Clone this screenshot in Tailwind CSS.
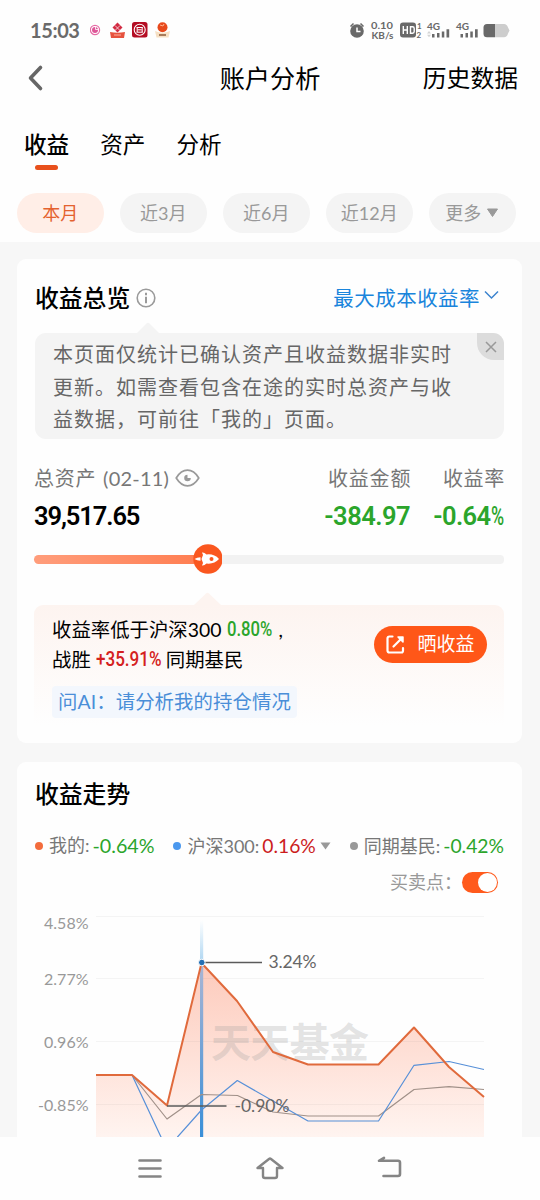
<!DOCTYPE html>
<html lang="zh-CN">
<head>
<meta charset="utf-8">
<meta name="viewport" content="width=device-width">
<title>账户分析</title>
<script src="https://cdn.jsdelivr.net/npm/@tailwindcss/browser@4"></script>
</head>
<body class="w-[540px] h-[1200px] overflow-hidden bg-[#f7f7f7] font-['Lato','Noto_Sans_CJK_SC',sans-serif] text-black whitespace-nowrap">
<div class="flex flex-col h-[1200px]">
<header class="bg-[#fefefe] h-[242px] shrink-0 flex flex-col">
  <!-- Status bar -->
  <div class="h-[60px] shrink-0 flex items-center justify-between pl-[30px] pr-[30px]">
    <div class="flex items-center">
      <span class="w-[60px] text-[20px] leading-none font-bold text-[#6a6a6a] tracking-[-0.400px]">15:03</span>
      <svg width="82" height="18" viewBox="0 0 82 18">
        <circle cx="5" cy="9" r="4.600" fill="#fff" stroke="#e66aa5" stroke-width="1.200"/><circle cx="5" cy="9" r="3" fill="#dd5798"/><path d="M5.500 6v2.500h2.500" stroke="#fff" stroke-width=".8" fill="none"/>
        <path d="M27.500 1.500l5 5-5 5-5-5z" fill="#d22b42"/><path d="M25 4.500l5 5m0-5l-5 5" stroke="#fff" stroke-width=".7"/><path d="M20 11q7.500 1.500 15 0l-1 6H21z" fill="#e6523e"/><path d="M24 14h7" stroke="#ffb09d"/>
        <rect x="42" y="1" width="15.500" height="15.500" rx="2.500" fill="#b40e24"/><circle cx="49.700" cy="8.800" r="5.500" fill="none" stroke="#fff" stroke-width="1.100"/><path d="M46.500 6.500h6.400M46.500 11.200h6.400M47.700 8.800h4M47.200 7v4M52.200 7v4" stroke="#fff" fill="none"/>
        <circle cx="72.500" cy="6.300" r="5" fill="#e8491c"/><path d="M70 4l3 1 1-2" stroke="#ffb18c" fill="none"/><path d="M65 10q7.500 3.500 15 0l-1.500 6.500h-12z" fill="#f6dfc3"/><path d="M69 14h7" stroke="#8d5a38" stroke-width="1.500"/>
      </svg>
    </div>
    <svg width="161" height="22" viewBox="349 19 161 22" class="text-[#696969] font-['Lato',sans-serif]" fill="currentColor">
      <circle cx="357" cy="31" r="6.800"/><path d="M350.500 26.500l3-3M363.500 26.500l-3-3" stroke="currentColor" stroke-width="1.500"/><path d="M357 27.500v4h3.500" stroke="#fff" stroke-width="1.500" fill="none"/>
      <text x="371" y="29" font-size="9.500" font-weight="700" textLength="22" lengthAdjust="spacingAndGlyphs">0.10</text>
      <text x="371.500" y="38.700" font-size="9" font-weight="700" textLength="22" lengthAdjust="spacingAndGlyphs">KB/s</text>
      <rect x="400" y="22.500" width="16" height="15" rx="3"/><path d="M403.300 26v8M407.300 26v8M403.300 30h4M410.500 26.700h2q1.700 0 1.700 1.700v3.200q0 1.700-1.700 1.700h-2z" stroke="#fff" stroke-width="1.400" fill="none"/>
      <text x="417" y="28.500" font-size="8" font-weight="700">1</text><text x="416.500" y="37.500" font-size="8" font-weight="700">2</text>
      <text x="427" y="30" font-size="10" font-weight="700" textLength="13">4G</text><text x="456" y="30" font-size="10" font-weight="700" textLength="13">4G</text>
      <path d="M432 34h2.500v3.500H432zM437 33h2.500v4.500H437zM441.800 31.500h2.500v6h-2.500zM446.500 29.300h2.700v8.200h-2.700zM460.500 34h2.500v3.500h-2.500zM465.500 33h2.500v4.500h-2.500zM470.300 31.500h2.500v6h-2.500zM475 29.300h2.700v8.200H475z"/>
      <path d="M427 33.500l2-2.500 2 2.500zM427 34.800l2 2.500 2-2.500z" fill="#d4d4d4"/>
      <path d="M495 24h9q3 0 4 3.500l1.500 3-1.500 3q-1 3.800-4 3.800h-9z" fill="#cdcdcd"/><path d="M487 24h8v13.300h-8q-3.500 0-3.500-3.500v-6.300q0-3.500 3.500-3.500z"/>
    </svg>
  </div>
  <!-- Title bar -->
  <div class="h-[36px] shrink-0 grid grid-cols-[100px_340px_100px] items-center">
    <svg class="ml-[27px]" width="18" height="28" viewBox="0 0 18 28" fill="none" stroke="#666" stroke-width="3.600" stroke-linecap="round" stroke-linejoin="round"><path d="M13.500 3.500L3.500 14l10 10.500"/></svg>
    <h1 class="text-center text-[25.200px] leading-[36px]">账户分析</h1>
    <span class="justify-self-end mr-[22px] text-[23.800px] leading-[36px]">历史数据</span>
  </div>
  <!-- Tabs -->
  <nav class="mt-[31px] h-[43px] pl-[24px] flex gap-[31px] text-[22.600px] leading-[36px]">
    <div class="flex flex-col items-center font-medium">收益<span class="block w-[23px] h-[5px] rounded-full bg-[#e8501c] mt-[2px] shrink-0"></span></div>
    <div>资产</div><div>分析</div>
  </nav>
  <!-- Period filter -->
  <div class="mt-[23px] pl-[16.500px] flex gap-[15.500px] text-[18px] text-[#999]">
    <div class="w-[87.500px] h-[40px] rounded-full bg-[#ffeee7] text-[#e4622f] flex items-center justify-center">本月</div>
    <div class="w-[87.500px] h-[40px] rounded-full bg-[#f4f4f4] flex items-center justify-center">近3月</div>
    <div class="w-[87.500px] h-[40px] rounded-full bg-[#f4f4f4] flex items-center justify-center">近6月</div>
    <div class="w-[87.500px] h-[40px] rounded-full bg-[#f4f4f4] flex items-center justify-center">近12月</div>
    <div class="w-[87.500px] h-[40px] rounded-full bg-[#f4f4f4] flex items-center justify-center gap-[5px]">更多<svg width="13" height="10" viewBox="0 0 13 10"><path d="M1.500 1h10L6.500 8.500z" fill="#999" stroke="#999" stroke-linejoin="round"/></svg></div>
  </div>
</header>

<main class="grow overflow-hidden px-[17px] pt-[17px] pr-[18px] flex flex-col gap-[19px]">
  <!-- Overview card -->
  <section class="h-[484px] shrink-0 bg-[#fefefe] rounded-[9px] pl-[18px] pr-[18px] flex flex-col">
    <div class="h-[63px] pt-[14px] flex items-center">
      <h2 class="text-[23.800px] font-medium leading-[34px]">收益总览</h2>
      <svg class="ml-[6px]" width="20" height="20" viewBox="0 0 20 20"><circle cx="10" cy="10" r="8.800" fill="none" stroke="#9a9a9a" stroke-width="1.600"/><path d="M10 4.800v2.400M10 8.700v6.500" stroke="#9a9a9a" stroke-width="2"/></svg>
      <span class="ml-auto pt-px text-[20.500px] tracking-[0.450px] text-[#1a85dc]">最大成本收益率</span>
      <svg class="ml-[4px] mr-[5px] -mt-[4px]" width="15" height="11" viewBox="0 0 15 11" fill="none" stroke="#3c83ce" stroke-width="1.500"><path d="M1 1.500l6.500 6.500L14 1.500"/></svg>
    </div>
    <svg class="ml-[102px] shrink-0" width="22" height="11" viewBox="0 0 22 11"><path d="M0 11L9.500 1.500q1.500-1.500 3 0L22 11z" fill="#f4f4f4"/></svg>
    <div class="h-[106px] shrink-0 rounded-[11px] bg-[#f4f4f4] flex justify-between overflow-hidden pl-[18px]">
      <p class="pt-[5px] text-[20px] tracking-[1px] leading-[32.500px] text-[#666]">本页面仅统计已确认资产且收益数据非实时<br>更新。如需查看包含在途的实时总资产与收<br>益数据，可前往「我的」页面。</p>
      <div class="w-[27px] h-[27px] shrink-0 rounded-bl-[17px] bg-[#dcdcdc] flex items-center justify-center"><svg width="12" height="12" viewBox="0 0 12 12" stroke="#999" stroke-width="1.500"><path d="M1 1l10 10M11 1L1 11"/></svg></div>
    </div>
    <div class="h-[104px] shrink-0 pt-[24px] flex justify-between">
      <div class="-ml-px">
        <div class="flex items-center h-[30px] text-[20px] text-[#777]"><span class="tracking-[0.700px]">总资产</span><span class="ml-[7px] tracking-[0.200px]">(02-11)</span>
          <svg class="ml-[6px]" width="25" height="18" viewBox="0 0 25 18" fill="none"><path d="M1.200 9Q6 1.200 12.500 1.200T23.800 9Q19 16.800 12.500 16.800T1.200 9z" stroke="#999" stroke-width="1.700" stroke-linejoin="round"/><path d="M12.500 5.700a3.300 3.300 0 1 0 3.300 3.300h-3.300z" fill="#999"/></svg></div>
        <div class="font-['Roboto',sans-serif] font-semibold text-[25.500px] leading-[46px] tracking-[-1.100px]">39,517.65</div>
      </div>
      <div class="flex gap-[22px] text-right text-[20px] text-[#777]">
        <div><div class="h-[30px] leading-[30px] tracking-[0.800px]">收益金额</div><div class="font-['Roboto',sans-serif] font-semibold text-[25.500px] leading-[46px] text-[#2ba52b] tracking-[-0.500px] pr-px">-384.97</div></div>
        <div><div class="h-[30px] leading-[30px] tracking-[0.700px] -mr-px">收益率</div><div class="flex justify-end font-['Roboto',sans-serif] font-semibold text-[25.500px] leading-[46px] text-[#2ba52b] tracking-[-0.600px]">-0.64<span class="inline-block w-[13.500px] text-left"><span class="inline-block origin-left scale-x-[0.700] font-medium">%</span></span></div></div>
      </div>
    </div>
    <!-- Ranking track -->
    <div class="mt-px h-[30px] shrink-0 flex items-center -ml-px">
      <div class="h-[9px] w-[160px] rounded-l-full bg-linear-to-r from-[#ff9d7b] to-[#ff7f53]"></div>
      <svg class="shrink-0 -ml-px" width="30" height="30" viewBox="0 0 30 30"><circle cx="15" cy="15" r="14.700" fill="#fa571f"/><path d="M8.500 15L10 11 9 8.500Q11 8 13.500 10.500Q21 9.500 26 15Q21 20.500 13.500 19.500Q11 22 9 21.500L10 19zM1.500 15q2.500-1.800 6-1.800v3.600q-3.500 0-6-1.800z" fill="#fff"/><circle cx="18.500" cy="15" r="2" fill="#fa571f"/></svg>
      <div class="h-[9px] grow rounded-r-[4px] bg-[#f2f2f2] -ml-px"></div>
    </div>
    <svg class="ml-[159px] mt-[18px] shrink-0" width="27" height="13" viewBox="0 0 27 13"><path d="M0 13L12 1.500q1.500-1.300 3 0L27 13z" fill="#fdf4f0"/></svg>
    <div class="-ml-px h-[120px] shrink-0 rounded-t-[9px] bg-linear-to-b from-[#fdf4f0] to-[#fefefe] pl-[18px] pr-[17px] flex justify-between">
      <div class="pt-[10px] text-[19.400px] leading-[30px]">
        <div class="flex">收益率低于沪深300<span class="ml-[6px] w-[45px] font-['Roboto'] font-medium text-[#2ba52b]"><span class="inline-block origin-left scale-x-[0.860]">0.80%</span></span><span class="ml-[6px]">,</span></div>
        <div class="flex">战胜<span class="ml-[5px] w-[66px] font-['Roboto'] font-medium text-[#d42020]"><span class="inline-block origin-left scale-x-[0.880]">+35.91%</span></span><span class="ml-[4px]">同期基民</span></div>
        <div class="mt-[11px] w-[245px] h-[32px] rounded-[4px] bg-[#f3f7fd] pl-[6px] text-[#4a8ed8] leading-[32px] tracking-[0.080px]">问AI：请分析我的持仓情况</div>
      </div>
      <div class="mt-[21px] w-[113px] h-[37px] rounded-full bg-[#ff5718] text-white text-[19px] flex items-center justify-center gap-[12px]"><svg width="19" height="19" viewBox="0 0 19 19" fill="none" stroke="#fff" stroke-width="2.200" stroke-linecap="round" stroke-linejoin="round"><path d="M6.500 1.500H3.500q-2 0-2 2v12q0 2 2 2h12q1.500 0 1.500-2v-2.500M7.500 11.500l8-8"/><path d="M12 2h5v5z" fill="#fff" stroke-width="1.500"/></svg>晒收益</div>
    </div>
  </section>

  <!-- Trend card -->
  <section class="h-[400px] shrink-0 bg-[#fefefe] rounded-t-[9px] flex flex-col">
    <h2 class="pl-[18px] pt-[15px] h-[66px] text-[23.800px] font-medium leading-[34px]">收益走势</h2>
    <div class="h-[36px] flex items-center justify-between pl-[18px] pr-[18px] text-[18px] text-[#777]">
      <div class="flex items-center"><i class="w-[8px] h-[8px] rounded-full bg-[#f36c3c] mr-[6px]"></i>我的:<span class="ml-[3px] text-[19.700px] text-[#2ba52b]">-0.64%</span></div>
      <div class="flex items-center"><i class="w-[8px] h-[8px] rounded-full bg-[#4b98ee] mr-[6px]"></i>沪深300:<span class="ml-[3px] text-[19.300px] text-[#cc1c1c]">0.16%</span><svg class="ml-[4px]" width="11" height="8" viewBox="0 0 11 8"><path d="M.5.500h10l-5 7z" fill="#999"/></svg></div>
      <div class="flex items-center"><i class="w-[8px] h-[8px] rounded-full bg-[#999] mr-[6px]"></i>同期基民:<span class="ml-[3px] text-[19.300px] text-[#2ba52b]">-0.42%</span></div>
    </div>
    <div class="h-[36px] flex items-center justify-end gap-[8px] pt-px pr-[24px] text-[18px] text-[#999]"><span class="w-[64px]">买卖点：</span><div class="w-[36px] h-[21px] rounded-full bg-[#ff5a1c] flex items-center justify-end p-px"><i class="w-[19px] h-[19px] rounded-full bg-white"></i></div></div>
    <svg class="shrink-0" width="505" height="237" viewBox="17 900 505 237" font-family="Lato,'Noto Sans CJK SC',sans-serif">
      <defs>
        <linearGradient id="area" x1="0" y1="963" x2="0" y2="1137" gradientUnits="userSpaceOnUse"><stop stop-color="#fdcabb"/><stop offset="1" stop-color="#fff4f0"/></linearGradient>
        <linearGradient id="bar" x1="0" y1="920" x2="0" y2="1137" gradientUnits="userSpaceOnUse"><stop stop-color="#b9ddf5" stop-opacity="0"/><stop offset=".18" stop-color="#b3d8f2"/><stop offset=".22" stop-color="#a8b5d4"/><stop offset="1" stop-color="#398fd8"/></linearGradient>
      </defs>
      <path d="M96 1075H132L167 1105.500 201.500 963 237 1001 273 1052 308 1064.500H378.500L414 1027.500 449 1067 484 1097V1137H96z" fill="url(#area)"/>
      <path d="M96 916.500H484M96 978.500H484M96 1041.500H484M96 1104.500H484" stroke="#777" stroke-opacity=".07"/>
      <text x="211" y="1057" font-size="40" font-weight="700" fill="#999" fill-opacity=".27" textLength="158">天天基金</text>
      <rect x="200" y="920" width="3.200" height="217" fill="url(#bar)"/>
      <g fill="none" stroke-linejoin="round">
        <path d="M132 1075L167 1119 201.500 1094.500 237.500 1095.500 273 1112 308 1116H378.500L414 1089.500 449 1086.700 484 1089.500" stroke="#a09088" stroke-width="1.200"/>
        <path d="M132 1075L161 1137 169 1154 177.500 1137 201.500 1110 237.300 1080.500 308 1121H378.500L414 1065.300 449 1061.500 484 1069.500" stroke="#5790d8" stroke-width="1.200"/>
        <path d="M96 1075H132L167 1105.500 201.500 963 237 1001 273 1052 308 1064.500H378.500L414 1027.500 449 1067 484 1097" stroke="#e06a3c" stroke-width="2"/>
      </g>
      <path d="M202 962.500H262M167 1106H226.500" stroke="#5b5b5b" stroke-width="1.400"/>
      <circle cx="201.800" cy="962.500" r="3.300" fill="#2470b5" stroke="#fff"/>
      <g font-size="16" fill="#999" text-anchor="end"><text x="88.500" y="929">4.58%</text><text x="88.500" y="984.500">2.77%</text><text x="88.500" y="1047.500">0.96%</text><text x="88.500" y="1110.500">-0.85%</text></g>
      <g font-size="17.500" fill="#666"><text x="268.500" y="968.300" textLength="48">3.24%</text><text x="234.500" y="1112" textLength="55">-0.90%</text></g>
    </svg>
  </section>
</main>

<!-- System navigation -->
<footer class="h-[63px] shrink-0 bg-[#fefefe] flex items-center justify-center gap-[92px] text-[#858585]">
  <svg width="28" height="26" viewBox="0 0 28 26" fill="none" stroke="currentColor" stroke-width="2.600" stroke-linecap="round"><path d="M3.500 4.500h21M3.500 12.500h21M3.500 20.500h21"/></svg>
  <svg width="28" height="26" viewBox="0 0 28 26" fill="none" stroke="currentColor" stroke-width="2.400" stroke-linecap="round" stroke-linejoin="round"><path d="M7 12H1.500L13 3q1-.8 2 0l11.500 9H21v8q0 2-2 2H9q-2 0-2-2z"/></svg>
  <svg width="28" height="26" viewBox="0 0 28 26" fill="none" stroke="currentColor" stroke-width="2.600" stroke-linecap="round" stroke-linejoin="round"><path d="M8 1.800L3 4.800H22q2 0 2 2v11.200q0 2-2 2H7.500"/></svg>
</footer>
</div>
</body>
</html>
